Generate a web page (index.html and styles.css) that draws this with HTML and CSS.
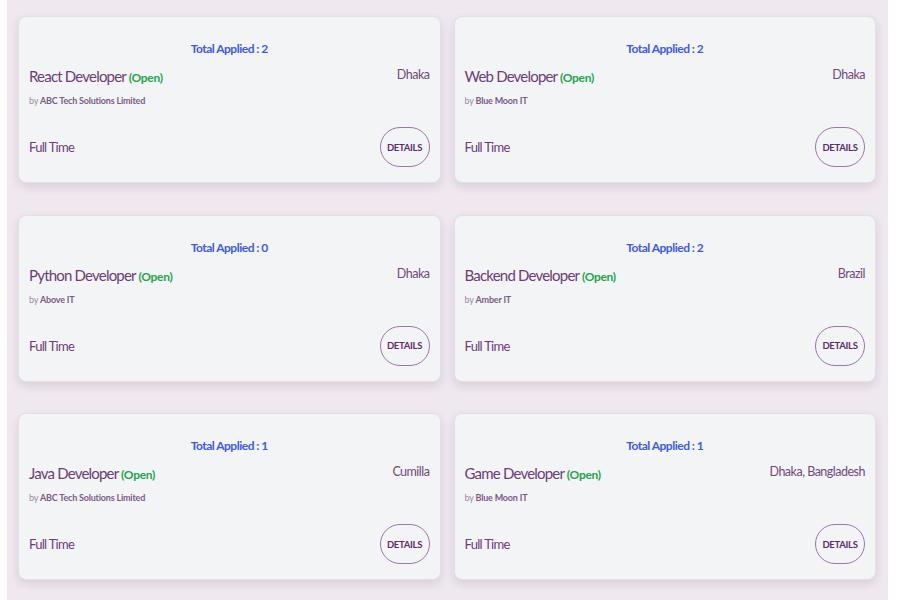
FILE: index.html
```html
<!DOCTYPE html>
<html>
<head>
<meta charset="utf-8">
<link rel="stylesheet" href="styles.css">
</head>
<body>
<div class="panel">
  <div class="grid">
    <div class="card">
      <div class="total">Total Applied : 2</div>
      <div class="head"><div class="title">React Developer <span class="open">(Open)</span></div><div class="loc">Dhaka</div></div>
      <div class="by">by <b>ABC Tech Solutions Limited</b></div>
      <div class="foot"><span class="type">Full Time</span><button class="btn">DETAILS</button></div>
    </div>
    <div class="card">
      <div class="total">Total Applied : 2</div>
      <div class="head"><div class="title">Web Developer <span class="open">(Open)</span></div><div class="loc">Dhaka</div></div>
      <div class="by">by <b>Blue Moon IT</b></div>
      <div class="foot"><span class="type">Full Time</span><button class="btn">DETAILS</button></div>
    </div>
    <div class="card">
      <div class="total">Total Applied : 0</div>
      <div class="head"><div class="title">Python Developer <span class="open">(Open)</span></div><div class="loc">Dhaka</div></div>
      <div class="by">by <b>Above IT</b></div>
      <div class="foot"><span class="type">Full Time</span><button class="btn">DETAILS</button></div>
    </div>
    <div class="card">
      <div class="total">Total Applied : 2</div>
      <div class="head"><div class="title">Backend Developer <span class="open">(Open)</span></div><div class="loc">Brazil</div></div>
      <div class="by">by <b>Amber IT</b></div>
      <div class="foot"><span class="type">Full Time</span><button class="btn">DETAILS</button></div>
    </div>
    <div class="card">
      <div class="total">Total Applied : 1</div>
      <div class="head"><div class="title">Java Developer <span class="open">(Open)</span></div><div class="loc">Cumilla</div></div>
      <div class="by">by <b>ABC Tech Solutions Limited</b></div>
      <div class="foot"><span class="type">Full Time</span><button class="btn">DETAILS</button></div>
    </div>
    <div class="card">
      <div class="total">Total Applied : 1</div>
      <div class="head"><div class="title">Game Developer <span class="open">(Open)</span></div><div class="loc">Dhaka, Bangladesh</div></div>
      <div class="by">by <b>Blue Moon IT</b></div>
      <div class="foot"><span class="type">Full Time</span><button class="btn">DETAILS</button></div>
    </div>
  </div>
</div>
</body>
</html>
```
FILE: styles.css
```css
html, body {
  margin: 0;
  padding: 0;
  background: #ffffff;
  font-family: Lato, "Open Sans", sans-serif;
}
.panel {
  margin-left: 7px;
  width: 881px;
  min-height: 600px;
  background: #efe8ef;
  box-sizing: border-box;
  padding: 16px 12px 16px 11px;
}
.grid {
  display: grid;
  grid-template-columns: 1fr 1fr;
  column-gap: 13px;
  row-gap: 31.5px;
}
.card {
  background: #f3f4f6;
  border: 1px solid #e2e0e5;
  border-radius: 8px;
  box-shadow: 0 4px 10px rgba(60, 30, 70, 0.12);
  padding: 24px 10px 15px 10px;
  display: flex;
  flex-direction: column;
}
.total {
  text-align: center;
  color: #3f5ae0;
  font-weight: 700;
  font-size: 12px;
  line-height: 16px;
  letter-spacing: -0.5px;
}
.head {
  margin-top: 10px;
  display: flex;
  justify-content: space-between;
  align-items: flex-start;
}
.title {
  color: #6b3d78;
  font-size: 15px;
  font-weight: 400;
  line-height: 18px;
  letter-spacing: -0.8px;
}
.open {
  color: #22a548;
  font-weight: 700;
  font-size: 12px;
  letter-spacing: -0.3px;
}
.loc {
  color: #6f4a7a;
  font-size: 12.5px;
  line-height: 16px;
  letter-spacing: -0.5px;
}
.by {
  margin-top: 7px;
  font-size: 9px;
  line-height: 14px;
  color: #9a8ca0;
  letter-spacing: -0.2px;
}
.by b {
  color: #7a5c84;
  font-weight: 700;
}
.foot {
  margin-top: 19px;
  display: flex;
  justify-content: space-between;
  align-items: center;
}
.type {
  color: #6b3d78;
  font-size: 13px;
  letter-spacing: -0.7px;
}
.btn {
  width: 50px;
  height: 40px;
  border: 1px solid #a073ab;
  border-radius: 20px;
  background: transparent;
  color: #5c2d6a;
  font-family: Lato, sans-serif;
  font-weight: 700;
  font-size: 9.5px;
  padding: 0;
  letter-spacing: -0.3px;
}
```
